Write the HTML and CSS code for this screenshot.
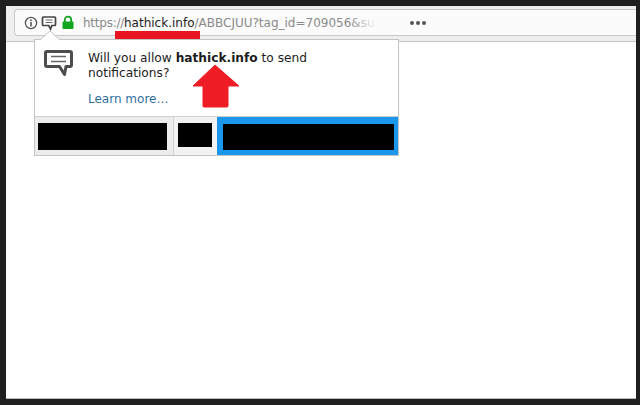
FILE: index.html
```html
<!DOCTYPE html>
<html lang="en">
<head>
  <meta charset="UTF-8">
  <title>Notification prompt</title>
  <link rel="stylesheet" href="styles.css">
</head>
<body>
  <div class="window">
    <div class="toolbar">
      <div class="urlbar">
        <svg class="icon-info" width="14" height="14" viewBox="0 0 14 14">
          <circle cx="7" cy="7" r="5.6" fill="none" stroke="#555" stroke-width="1.3"/>
          <rect x="6.2" y="6" width="1.6" height="4.4" fill="#555"/>
          <rect x="6.2" y="3.5" width="1.6" height="1.6" fill="#555"/>
        </svg>
        <svg class="icon-msg" width="16" height="16" viewBox="0 0 16 16">
          <path d="M2.5 2h11a1 1 0 0 1 1 1v6.500a1 1 0 0 1-1 1h-2.700l-1.300 3.500-1.800-3.500H2.500a1 1 0 0 1-1-1V3a1 1 0 0 1 1-1z" fill="#fff" stroke="#444" stroke-width="1.700"/>
          <path d="M4.500 5h7M4.500 7.500h7" stroke="#666" stroke-width="1.100"/>
        </svg>
        <svg class="icon-lock" width="14" height="15" viewBox="0 0 14 15">
          <path d="M3.800 7V4.800a3.200 3.200 0 0 1 6.400 0V7" fill="none" stroke="#12a51e" stroke-width="1.800"/>
          <rect x="1.500" y="6.500" width="11" height="7.500" rx="1" fill="#12a51e"/>
        </svg>
        <div class="url"><span class="url-dim url-scheme">https://</span>hathick.info<span class="url-dim">/ABBCJUU?tag_id=709056&amp;su</span><span class="url-fade"></span></div>
        <div class="dots"><i></i><i></i><i></i></div>
      </div>
    </div>
    <div class="url-mark"></div>

    <div class="popup">
      <svg class="popup-tail" width="20" height="10" viewBox="0 0 20 10">
        <path d="M0 10 L10 1 L20 10" fill="#fff" stroke="#c4c4c4"/>
      </svg>
      <div class="popup-body">
        <svg class="popup-icon" width="32" height="32" viewBox="0 0 32 32">
          <path d="M4 2.500h23a1.500 1.500 0 0 1 1.500 1.500v12a1.500 1.500 0 0 1-1.500 1.500h-4l-1.500 8-5-8H4a1.500 1.500 0 0 1-1.500-1.500V4A1.500 1.500 0 0 1 4 2.500z" fill="#fff" stroke="#4d4d4d" stroke-width="3" stroke-linejoin="round"/>
          <path d="M8 7.500h15M8 12.500h15" stroke="#666" stroke-width="1.600"/>
        </svg>
        <div class="popup-text">
          <p class="popup-msg">Will you allow <b>hathick.info</b> to send notifications?</p>
          <a class="popup-link" href="#">Learn more…</a>
        </div>
      </div>
      <div class="popup-actions">
        <div class="action action-first"><span class="redact"></span></div>
        <div class="action action-second"><span class="redact"></span></div>
        <div class="action action-main"><span class="redact"></span></div>
      </div>
    </div>

    <svg class="big-arrow" width="48" height="44" viewBox="0 0 48 44">
      <path d="M23 1 L47 22 L36 22 L36 42 Q36 43 35 43 L12 43 Q11 43 11 42 L11 22 L1 22 Z" fill="#ee1c25" stroke="#ee1c25" stroke-linejoin="round"/>
    </svg>
  </div>
</body>
</html>
```

FILE: styles.css
```css
/* General Styles */
html, body {
  margin: 0;
  padding: 0;
  height: 100%;
}

body {
  background: #1f1f1f;
  font-family: 'DejaVu Sans', sans-serif;
  color: #1c1c1c;
  overflow: hidden;
}

.window {
  position: relative;
  box-sizing: border-box;
  width: 630px;
  height: 393px;
  margin: 6px 0 0 6px;
  background: #fff;
  border-bottom: 1px solid #bbb;
}

/* Toolbar */
.toolbar {
  box-sizing: border-box;
  height: 36px;
  padding: 3px 0 5px 8px;
  background: #eeeeee;
  border-bottom: 1px solid #c4c4c4;
}

.urlbar {
  box-sizing: border-box;
  height: 27px;
  display: flex;
  align-items: center;
  padding-left: 9px;
  background: #fbfbfb;
  border: 1px solid #c8c8c8;
  border-right: 0;
  border-radius: 4px 0 0 4px;
}

.icon-msg {
  margin-left: 3px;
}

.icon-lock {
  margin-left: 4px;
}

.url {
  position: relative;
  width: 300px;
  margin-left: 8px;
  font-size: 12px;
  white-space: nowrap;
}

.url-dim {
  color: #8a8a8a;
}

.url-scheme {
  letter-spacing: -0.250px;
}

.url-fade {
  position: absolute;
  top: 0;
  right: 0;
  bottom: 0;
  width: 34px;
  background: linear-gradient(to right, rgba(251, 251, 251, 0), #fbfbfb 85%);
}

.dots {
  display: flex;
  gap: 2px;
  margin-left: 27px;
}

.dots i {
  width: 4px;
  height: 4px;
  border-radius: 50%;
  background: #555;
}

/* Red underline on the domain */
.url-mark {
  position: absolute;
  left: 109px;
  top: 25px;
  width: 85px;
  height: 8px;
  background: #e8141f;
}

/* Notification popup */
.popup {
  position: absolute;
  left: 28px;
  top: 33px;
  box-sizing: border-box;
  width: 365px;
  height: 117px;
  display: flex;
  flex-direction: column;
  background: #fff;
  border: 1px solid #c4c4c4;
}

.popup-tail {
  position: absolute;
  left: 5px;
  top: -10px;
}

.popup-body {
  flex: 1;
  display: flex;
  padding: 9px 0 0 8px;
}

.popup-icon {
  flex: none;
  margin-right: 13px;
}

.popup-text {
  padding-top: 2px;
}

.popup-msg {
  margin: 0 0 7px;
  width: 270px;
  font-size: 12.200px;
  line-height: 15px;
}

.popup-link {
  font-size: 12px;
  color: #2f6f9f;
  text-decoration: none;
}

.popup-actions {
  display: flex;
  height: 38px;
  border-top: 1px solid #d0d0d0;
}

.action {
  box-sizing: border-box;
  display: flex;
}

.redact {
  display: block;
  background: #000;
}

.action-first {
  width: 139px;
  padding: 6px 6px 3px 3px;
  background: #ececec;
  border-right: 1px solid #cfcfcf;
}

.action-first .redact {
  width: 129px;
  height: 27px;
}

.action-second {
  width: 43px;
  padding: 6px 5px 0 4px;
  background: #f2f2f2;
}

.action-second .redact {
  width: 34px;
  height: 24px;
}

.action-main {
  flex: 1;
  padding: 7px 4px 5px 6px;
  background: #1a96ec;
}

.action-main .redact {
  flex: 1;
}

/* Big red arrow pointing at the domain */
.big-arrow {
  position: absolute;
  left: 186px;
  top: 58px;
}
```
